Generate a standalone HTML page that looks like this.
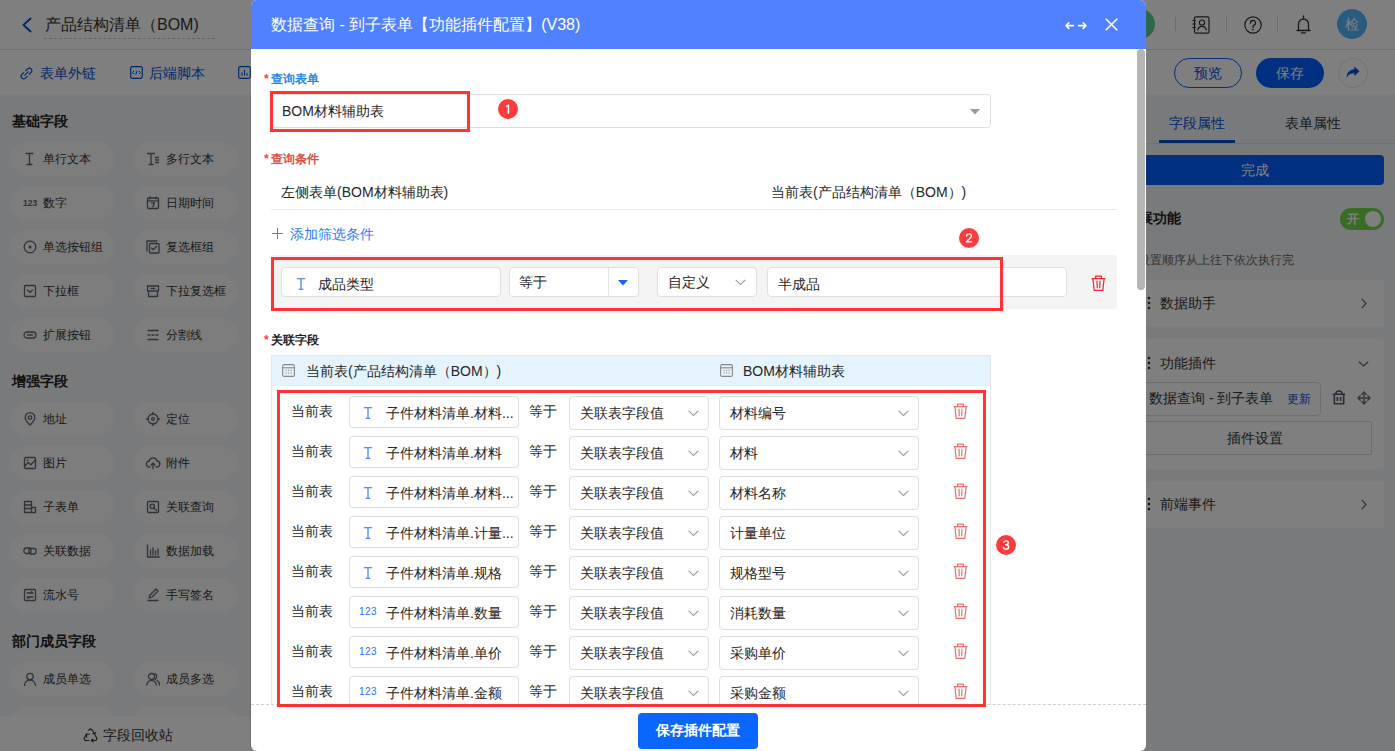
<!DOCTYPE html>
<html><head><meta charset="utf-8">
<style>
*{box-sizing:border-box;margin:0;padding:0}
html,body{width:1395px;height:751px;overflow:hidden;background:#fff}
body{position:relative;font-family:"Liberation Sans",sans-serif;font-size:14px;color:#262626}
.a{position:absolute}
.t{position:absolute;white-space:nowrap;line-height:20px}
svg{position:absolute;overflow:visible}
/* base page */
#hdr{left:0;top:0;width:1395px;height:50px;background:#fff;border-bottom:1px solid #e6e6e6}
#tb{left:0;top:50px;width:1395px;height:45px;background:#fff}
#lp{left:0;top:95px;width:251px;height:656px;background:#f3f4f7;border-right:1px solid #e2e2e2}
#rp{left:1146px;top:95px;width:249px;height:656px;background:#f3f4f7}
.chip{position:absolute;width:105px;height:34px;border-radius:17px;background:#fafafb}
.chip span{position:absolute;left:33px;top:7px;line-height:20px;font-size:12px;color:#333;white-space:nowrap}
.sec{position:absolute;left:12px;font-size:14px;font-weight:bold;color:#222;line-height:20px}
#mask{left:0;top:0;width:1395px;height:751px;background:rgba(0,0,0,.5)}
/* modal */
#modal{left:251px;top:0;width:895px;height:751px;background:#fff;border-radius:6px;overflow:hidden}
#mh{left:0;top:0;width:895px;height:49px;background:#5082ff}
.lbl{position:absolute;font-size:12px;font-weight:bold;line-height:16px;white-space:nowrap}
.lbl i{font-style:normal;color:#f5453d;margin-right:2px}
.box{position:absolute;background:#fff;border:1px solid #dfdfdf;border-radius:4px}
.rbox{position:absolute;border:3px solid #ff3333}
.badge{position:absolute;width:20px;height:20px;border-radius:10px;background:#ff3b3b;color:#fff;font-size:12px;line-height:20px;text-align:center}
</style></head><body>
<!-- ============ BASE PAGE ============ -->
<div id="hdr" class="a"></div>
<div id="tb" class="a"></div>
<div id="lp" class="a"></div>
<div id="rp" class="a"></div>
<!-- header -->
<svg style="left:21px;top:17px" width="11" height="16" viewBox="0 0 11 16"><path d="M9.5 1.5L2.5 8l7 6.5" fill="none" stroke="#0052d9" stroke-width="2" stroke-linecap="round" stroke-linejoin="round"/></svg>
<div class="t" style="left:45px;top:14px;font-size:16px;line-height:22px;color:#333">产品结构清单（BOM)</div>
<div class="a" style="left:44px;top:38px;width:171px;height:0;border-top:1px dashed #c8c8c8"></div>
<div class="a" style="left:1125px;top:9px;width:30px;height:30px;border-radius:15px;background:#5ad38f"></div>
<div class="a" style="left:1175px;top:17px;width:1px;height:14px;background:#d9d9d9"></div>
<div class="a" style="left:1226px;top:17px;width:1px;height:14px;background:#d9d9d9"></div>
<div class="a" style="left:1277px;top:17px;width:1px;height:14px;background:#d9d9d9"></div>
<svg style="left:1192px;top:16px" width="18" height="18" viewBox="0 0 18 18"><rect x="2.5" y="0.8" width="14.5" height="16.4" rx="1.5" fill="none" stroke="#333" stroke-width="1.2"/><circle cx="10" cy="6.6" r="2.6" fill="none" stroke="#333" stroke-width="1.2"/><path d="M5.6 14.3c0.6-2.8 2.3-4 4.4-4s3.8 1.2 4.4 4" fill="none" stroke="#333" stroke-width="1.2"/><path d="M0.3 4.5h3.5M0.3 8h3.5M0.3 11.5h3.5" stroke="#333" stroke-width="1.2"/></svg>
<svg style="left:1244px;top:16px" width="18" height="18" viewBox="0 0 18 18"><circle cx="9" cy="9" r="8.2" fill="none" stroke="#333" stroke-width="1.2"/><path d="M6.5 7a2.5 2.5 0 1 1 3.6 2.2c-.8.4-1.1.9-1.1 1.7v.6" fill="none" stroke="#333" stroke-width="1.3" stroke-linecap="round"/><circle cx="9" cy="13.6" r="0.9" fill="#333"/></svg>
<svg style="left:1296px;top:15px" width="15" height="19" viewBox="0 0 15 19"><path d="M1 15.5h13M2.5 15.5V9a5 5 0 0 1 10 0v6.5" fill="none" stroke="#333" stroke-width="1.3" stroke-linecap="round"/><path d="M7.5 1v2" stroke="#333" stroke-width="1.3" stroke-linecap="round"/><path d="M5.5 17.8h4" stroke="#333" stroke-width="1.3" stroke-linecap="round"/></svg>
<div class="a" style="left:1337px;top:9px;width:30px;height:30px;border-radius:15px;background:#57b4ff;color:#fff;font-size:14px;line-height:30px;text-align:center">检</div>
<!-- toolbar -->
<svg style="left:20px;top:67px" width="13" height="13" viewBox="0.5 0.5 11 11"><path d="M4.6 7.4l2.8-2.8M3.6 5.4L2.1 6.9a2.1 2.1 0 0 0 3 3l1.5-1.5M8.4 6.6l1.5-1.5a2.1 2.1 0 0 0-3-3L5.4 3.6" fill="none" stroke="#0052d9" stroke-width="1" stroke-linecap="round"/></svg>
<div class="t" style="left:40px;top:63px;color:#0052d9">表单外链</div>
<svg style="left:130px;top:66px" width="13" height="13" viewBox="0 0 13 13"><rect x="0.7" y="0.7" width="11.6" height="11.6" rx="1.5" fill="none" stroke="#0052d9" stroke-width="1.2"/><path d="M4 8l-1.5-1.5L4 5M9 5l1.5 1.5L9 8M7.2 4.5L5.8 8.5" fill="none" stroke="#0052d9" stroke-width="1"/></svg>
<div class="t" style="left:149px;top:63px;color:#0052d9">后端脚本</div>
<svg style="left:238px;top:66px" width="13" height="13" viewBox="0 0 13 13"><rect x="0.7" y="0.7" width="11.6" height="11.6" rx="1.5" fill="none" stroke="#0052d9" stroke-width="1.2"/><path d="M4 9.5V6.5M6.5 9.5V4M9 9.5V7" stroke="#0052d9" stroke-width="1.1"/></svg>
<div class="a" style="left:1174px;top:58px;width:68px;height:30px;border-radius:15px;border:1px solid #0061ff;color:#0052d9;font-size:14px;line-height:28px;text-align:center">预览</div>
<div class="a" style="left:1256px;top:58px;width:68px;height:30px;border-radius:15px;background:#0061ff;color:#fff;font-size:14px;line-height:30px;text-align:center">保存</div>
<div class="a" style="left:1338px;top:58px;width:30px;height:30px;border-radius:15px;border:1px solid #dfe6f5;background:#fff"></div>
<svg style="left:1346px;top:66px" width="14" height="13" viewBox="0 0 14 13"><path d="M13.5 5.2L8.3 0.5v2.8C3.5 3.6 1 6.5 0.5 12c1.8-3.4 4.2-4.8 7.8-4.8v2.8z" fill="#0052d9"/></svg>
<!-- left panel -->
<div class="sec" style="top:111px">基础字段</div>
<div class="sec" style="top:371px">增强字段</div>
<div class="sec" style="top:631px">部门成员字段</div>
<div class="chip" style="left:10px;top:142px"><span>单行文本</span></div>
<svg style="left:23px;top:152px" width="14" height="14" viewBox="0 0 14 14"><path d="M3 1.5h7M6.5 1.5v11M4 12.5h5" stroke="#5f6675" stroke-width="1.3" fill="none" stroke-linecap="round" stroke-linejoin="round"/></svg>
<div class="chip" style="left:133px;top:142px"><span>多行文本</span></div>
<svg style="left:146px;top:152px" width="14" height="14" viewBox="0 0 14 14"><path d="M1.5 1.5h7M5 1.5v11M3 12.5h4M9.5 5.5h3M9.5 8h3M9.5 10.5h3" stroke="#5f6675" stroke-width="1.3" fill="none" stroke-linecap="round" stroke-linejoin="round"/></svg>
<div class="chip" style="left:10px;top:186px"><span>数字</span></div>
<svg style="left:23px;top:196px" width="14" height="14" viewBox="0 0 14 14"><text x="0" y="10" font-size="8.5" font-weight="bold" fill="#5f6675" font-family="Liberation Sans">123</text></svg>
<div class="chip" style="left:133px;top:186px"><span>日期时间</span></div>
<svg style="left:146px;top:196px" width="14" height="14" viewBox="0 0 14 14"><rect x="1.5" y="2" width="11" height="10.5" rx="1.2" stroke="#5f6675" stroke-width="1.3" fill="none" stroke-linecap="round" stroke-linejoin="round"/><path d="M1.5 4.8h11M4 0.8v2M10 0.8v2M5.5 6.8h3l-1.8 4" stroke="#5f6675" stroke-width="1.3" fill="none" stroke-linecap="round" stroke-linejoin="round"/></svg>
<div class="chip" style="left:10px;top:230px"><span>单选按钮组</span></div>
<svg style="left:23px;top:240px" width="14" height="14" viewBox="0 0 14 14"><circle cx="7" cy="7" r="5.8" stroke="#5f6675" stroke-width="1.3" fill="none" stroke-linecap="round" stroke-linejoin="round"/><circle cx="7" cy="7" r="1.5" fill="#5f6675"/></svg>
<div class="chip" style="left:133px;top:230px"><span>复选框组</span></div>
<svg style="left:146px;top:240px" width="14" height="14" viewBox="0 0 14 14"><rect x="3.5" y="3.5" width="9.5" height="9.5" rx="1" stroke="#5f6675" stroke-width="1.3" fill="none" stroke-linecap="round" stroke-linejoin="round"/><path d="M1 11V1h10M5.5 8l1.8 1.8 3.4-3.6" stroke="#5f6675" stroke-width="1.3" fill="none" stroke-linecap="round" stroke-linejoin="round"/></svg>
<div class="chip" style="left:10px;top:274px"><span>下拉框</span></div>
<svg style="left:23px;top:284px" width="14" height="14" viewBox="0 0 14 14"><rect x="1.5" y="1.5" width="11" height="11" rx="1" stroke="#5f6675" stroke-width="1.3" fill="none" stroke-linecap="round" stroke-linejoin="round"/><path d="M4.5 6l2.5 2.5L9.5 6" stroke="#5f6675" stroke-width="1.3" fill="none" stroke-linecap="round" stroke-linejoin="round"/></svg>
<div class="chip" style="left:133px;top:274px"><span>下拉复选框</span></div>
<svg style="left:146px;top:284px" width="14" height="14" viewBox="0 0 14 14"><path d="M1.5 2h11v5h-11zM2.5 7v5.5h9V7M5 4.5h4" stroke="#5f6675" stroke-width="1.3" fill="none" stroke-linecap="round" stroke-linejoin="round"/></svg>
<div class="chip" style="left:10px;top:318px"><span>扩展按钮</span></div>
<svg style="left:23px;top:328px" width="14" height="14" viewBox="0 0 14 14"><rect x="1" y="4" width="12" height="6" rx="3" stroke="#5f6675" stroke-width="1.3" fill="none" stroke-linecap="round" stroke-linejoin="round"/><path d="M4.5 7h5" stroke="#5f6675" stroke-width="1.3" fill="none" stroke-linecap="round" stroke-linejoin="round"/></svg>
<div class="chip" style="left:133px;top:318px"><span>分割线</span></div>
<svg style="left:146px;top:328px" width="14" height="14" viewBox="0 0 14 14"><path d="M2 2.5h10M2 11.5h10M2 7h2M6 7h2M10 7h2" stroke="#5f6675" stroke-width="1.3" fill="none" stroke-linecap="round" stroke-linejoin="round"/></svg>
<div class="chip" style="left:10px;top:402px"><span>地址</span></div>
<svg style="left:23px;top:412px" width="14" height="14" viewBox="0 0 14 14"><path d="M7 13s-4.8-4.6-4.8-7.6a4.8 4.8 0 0 1 9.6 0C11.8 8.4 7 13 7 13z" stroke="#5f6675" stroke-width="1.3" fill="none" stroke-linecap="round" stroke-linejoin="round"/><circle cx="7" cy="5.6" r="1.8" stroke="#5f6675" stroke-width="1.3" fill="none" stroke-linecap="round" stroke-linejoin="round"/></svg>
<div class="chip" style="left:133px;top:402px"><span>定位</span></div>
<svg style="left:146px;top:412px" width="14" height="14" viewBox="0 0 14 14"><circle cx="7" cy="7" r="5" stroke="#5f6675" stroke-width="1.3" fill="none" stroke-linecap="round" stroke-linejoin="round"/><circle cx="7" cy="7" r="1.4" stroke="#5f6675" stroke-width="1.3" fill="none" stroke-linecap="round" stroke-linejoin="round"/><path d="M7 0.5v2M7 11.5v2M0.5 7h2M11.5 7h2" stroke="#5f6675" stroke-width="1.3" fill="none" stroke-linecap="round" stroke-linejoin="round"/></svg>
<div class="chip" style="left:10px;top:446px"><span>图片</span></div>
<svg style="left:23px;top:456px" width="14" height="14" viewBox="0 0 14 14"><rect x="1.5" y="1.5" width="11" height="11" rx="1.2" stroke="#5f6675" stroke-width="1.3" fill="none" stroke-linecap="round" stroke-linejoin="round"/><path d="M1.8 10l3.5-3.5 2.5 2.2L12.3 4" stroke="#5f6675" stroke-width="1.3" fill="none" stroke-linecap="round" stroke-linejoin="round"/><circle cx="4.5" cy="4.5" r="0.9" fill="#5f6675"/></svg>
<div class="chip" style="left:133px;top:446px"><span>附件</span></div>
<svg style="left:146px;top:456px" width="14" height="14" viewBox="0 0 14 14"><path d="M4 11H3.5a3 3 0 0 1-.3-6A4 4 0 0 1 11 5a3 3 0 0 1-.5 6H10M7 12.8V7M5 9l2-2 2 2" stroke="#5f6675" stroke-width="1.3" fill="none" stroke-linecap="round" stroke-linejoin="round"/></svg>
<div class="chip" style="left:10px;top:490px"><span>子表单</span></div>
<svg style="left:23px;top:500px" width="14" height="14" viewBox="0 0 14 14"><path d="M1.5 1.5h7v11h-7zM1.5 5h7M8.5 7.5h4v5h-4M1.5 8.5h7" stroke="#5f6675" stroke-width="1.3" fill="none" stroke-linecap="round" stroke-linejoin="round"/></svg>
<div class="chip" style="left:133px;top:490px"><span>关联查询</span></div>
<svg style="left:146px;top:500px" width="14" height="14" viewBox="0 0 14 14"><rect x="1.5" y="1.5" width="11" height="11" rx="1" stroke="#5f6675" stroke-width="1.3" fill="none" stroke-linecap="round" stroke-linejoin="round"/><circle cx="6.3" cy="6.3" r="2.2" stroke="#5f6675" stroke-width="1.3" fill="none" stroke-linecap="round" stroke-linejoin="round"/><path d="M8 8l2.5 2.5" stroke="#5f6675" stroke-width="1.3" fill="none" stroke-linecap="round" stroke-linejoin="round"/></svg>
<div class="chip" style="left:10px;top:534px"><span>关联数据</span></div>
<svg style="left:23px;top:544px" width="14" height="14" viewBox="0 0 14 14"><rect x="1" y="4" width="7" height="5.5" rx="2" stroke="#5f6675" stroke-width="1.3" fill="none" stroke-linecap="round" stroke-linejoin="round"/><rect x="6" y="4.5" width="7" height="5.5" rx="2" stroke="#5f6675" stroke-width="1.3" fill="none" stroke-linecap="round" stroke-linejoin="round"/></svg>
<div class="chip" style="left:133px;top:534px"><span>数据加载</span></div>
<svg style="left:146px;top:544px" width="14" height="14" viewBox="0 0 14 14"><path d="M1.5 1v12h12M4.5 11V6M7 11V4M9.5 11V7M12 11V5" stroke="#5f6675" stroke-width="1.3" fill="none" stroke-linecap="round" stroke-linejoin="round"/></svg>
<div class="chip" style="left:10px;top:578px"><span>流水号</span></div>
<svg style="left:23px;top:588px" width="14" height="14" viewBox="0 0 14 14"><rect x="1.5" y="1.5" width="11" height="11" rx="1" stroke="#5f6675" stroke-width="1.3" fill="none" stroke-linecap="round" stroke-linejoin="round"/><path d="M4 5h6l-1.5-1.3M10 9H4l1.5 1.3" stroke="#5f6675" stroke-width="1.3" fill="none" stroke-linecap="round" stroke-linejoin="round"/></svg>
<div class="chip" style="left:133px;top:578px"><span>手写签名</span></div>
<svg style="left:146px;top:588px" width="14" height="14" viewBox="0 0 14 14"><path d="M2 12.5h10M3 10l1-3 6-6 2 2-6 6z" stroke="#5f6675" stroke-width="1.3" fill="none" stroke-linecap="round" stroke-linejoin="round"/></svg>
<div class="chip" style="left:10px;top:662px"><span>成员单选</span></div>
<svg style="left:23px;top:672px" width="14" height="14" viewBox="0 0 14 14"><circle cx="7" cy="4.5" r="3.2" stroke="#5f6675" stroke-width="1.3" fill="none" stroke-linecap="round" stroke-linejoin="round"/><path d="M1.5 13.5a5.5 5.5 0 0 1 11 0" stroke="#5f6675" stroke-width="1.3" fill="none" stroke-linecap="round" stroke-linejoin="round"/></svg>
<div class="chip" style="left:133px;top:662px"><span>成员多选</span></div>
<svg style="left:146px;top:672px" width="14" height="14" viewBox="0 0 14 14"><circle cx="5.5" cy="4.5" r="3" stroke="#5f6675" stroke-width="1.3" fill="none" stroke-linecap="round" stroke-linejoin="round"/><path d="M0.8 13a4.7 4.7 0 0 1 9.4 0M8.8 1.7a3 3 0 0 1 0 5.6M11 8.5a4.7 4.7 0 0 1 2.4 4.5" stroke="#5f6675" stroke-width="1.3" fill="none" stroke-linecap="round" stroke-linejoin="round"/></svg>
<div class="chip" style="left:10px;top:706px"><span></span></div>
<div class="chip" style="left:133px;top:706px"><span></span></div>
<!-- left bottom bar -->
<div class="a" style="left:0;top:716px;width:250px;height:35px;background:#fff"></div>
<svg style="left:83px;top:728px" width="15" height="14" viewBox="0 0 15 14"><path d="M5.6 2.2L7.5 0.8l1.9 1.4 2.2 3.8M12.6 4.6l-1 1.5-1.6-.6M3.5 6L1 10.5l1 2h4M3.7 9.2l-.3-3.1 2.9.2M8.5 12.5h4.5l1-2L12 7M10.2 14l-1.7-1.5 1.5-1.5" fill="none" stroke="#333" stroke-width="1.1" stroke-linecap="round" stroke-linejoin="round"/></svg>
<div class="t" style="left:103px;top:725px;color:#333">字段回收站</div>
<!-- right panel -->
<div class="a" style="left:1146px;top:143px;width:249px;height:1px;background:#e3e3e3"></div>
<div class="t" style="left:1169px;top:113px;color:#0052d9">字段属性</div>
<div class="t" style="left:1285px;top:113px;color:#333">表单属性</div>
<div class="a" style="left:1159px;top:140px;width:76px;height:3px;background:#0052d9"></div>
<div class="a" style="left:1126px;top:155px;width:258px;height:30px;border-radius:4px;background:#0061ff;color:#fff;font-size:14px;line-height:30px;text-align:center">完成</div>
<div class="t" style="left:1125px;top:208px;font-weight:bold;color:#222">扩展功能</div>
<div class="a" style="left:1340px;top:208px;width:44px;height:22px;border-radius:11px;background:#72d848"></div>
<div class="a" style="left:1365px;top:211px;width:16px;height:16px;border-radius:8px;background:#fff"></div>
<div class="t" style="left:1347px;top:209px;font-size:12px;color:#fff;font-weight:bold">开</div>
<div class="t" style="left:1138px;top:250px;font-size:12px;color:#666">设置顺序从上往下依次执行完</div>
<div class="a" style="left:1126px;top:280px;width:258px;height:47px;border-radius:4px;background:#fff"></div>
<div class="a" style="left:1126px;top:339px;width:258px;height:130px;border-radius:4px;background:#fff"></div>
<div class="a" style="left:1126px;top:481px;width:258px;height:47px;border-radius:4px;background:#fff"></div>
<div class="t" style="left:1160px;top:293px;color:#333">数据助手</div>
<div class="t" style="left:1160px;top:353px;color:#333">功能插件</div>
<div class="t" style="left:1160px;top:494px;color:#333">前端事件</div>
<svg style="left:1147px;top:296px" width="4" height="14" viewBox="0 0 4 14"><circle cx="2" cy="2" r="1.3" fill="#333"/><circle cx="2" cy="7" r="1.3" fill="#333"/><circle cx="2" cy="12" r="1.3" fill="#333"/></svg>
<svg style="left:1147px;top:356px" width="4" height="14" viewBox="0 0 4 14"><circle cx="2" cy="2" r="1.3" fill="#333"/><circle cx="2" cy="7" r="1.3" fill="#333"/><circle cx="2" cy="12" r="1.3" fill="#333"/></svg>
<svg style="left:1147px;top:497px" width="4" height="14" viewBox="0 0 4 14"><circle cx="2" cy="2" r="1.3" fill="#333"/><circle cx="2" cy="7" r="1.3" fill="#333"/><circle cx="2" cy="12" r="1.3" fill="#333"/></svg>
<svg style="left:1361px;top:298px" width="6" height="11" viewBox="0 0 6 11"><path d="M0.8 0.8L5 5.5 0.8 10.2" fill="none" stroke="#666" stroke-width="1.2"/></svg>
<svg style="left:1361px;top:499px" width="6" height="11" viewBox="0 0 6 11"><path d="M0.8 0.8L5 5.5 0.8 10.2" fill="none" stroke="#666" stroke-width="1.2"/></svg>
<svg style="left:1358px;top:361px" width="11" height="6" viewBox="0 0 11 6"><path d="M0.8 0.8L5.5 5 10.2 0.8" fill="none" stroke="#666" stroke-width="1.2"/></svg>
<div class="a" style="left:1126px;top:382px;width:195px;height:34px;border-radius:4px;border:1px solid #dcdcdc;background:#fff"></div>
<div class="t" style="left:1149px;top:388px;color:#333">数据查询 - 到子表单</div>
<div class="t" style="left:1287px;top:389px;font-size:12px;color:#0052d9">更新</div>
<svg style="left:1332px;top:390px" width="14" height="15" viewBox="0 0 14 15"><path d="M0.8 4.2h12.4M3.8 4.2C3.8 2 5.2 1 7 1s3.2 1 3.2 3.2M2.3 4.2v9.6h9.4V4.2M5.4 7v4M8.6 7v4" fill="none" stroke="#505a6e" stroke-width="1.6" stroke-linejoin="round"/></svg>
<svg style="left:1357px;top:391px" width="14" height="14" viewBox="0 0 14 14"><path d="M7 1v12M1 7h12M4.8 3.2L7 1l2.2 2.2M4.8 10.8L7 13l2.2-2.2M3.2 4.8L1 7l2.2 2.2M10.8 4.8L13 7l-2.2 2.2" fill="none" stroke="#6e7480" stroke-width="1.5" stroke-linecap="round" stroke-linejoin="round"/></svg>
<div class="a" style="left:1126px;top:421px;width:246px;height:34px;border-radius:2px;border:1px solid #dcdcdc;background:#fff;color:#333;font-size:14px;line-height:32px;text-align:center;padding-left:12px">插件设置</div>

<div id="mask" class="a"></div>
<div id="modal" class="a">
  <div id="mh" class="a"></div>
  <div class="t" style="left:20px;top:15px;font-size:16px;color:#fff">数据查询 - 到子表单【功能插件配置】(V38)</div>
  <svg style="left:814px;top:21px" width="22" height="9" viewBox="0 0 22 9"><path d="M1 4.6h7.5M1 4.6L3.8 1.8M1 4.6L3.8 7.4M13.5 4.6h7.5M21 4.6L18.2 1.8M21 4.6L18.2 7.4" fill="none" stroke="#fff" stroke-width="1.6" stroke-linecap="round" stroke-linejoin="round"/></svg>
  <svg style="left:854px;top:18px" width="13" height="13" viewBox="0 0 13 13"><path d="M0.7 0.7l11.6 11.6M12.3 0.7L0.7 12.3" stroke="#fff" stroke-width="1.6"/></svg>
  <div class="a" style="left:0;top:704px;width:895px;height:0;border-top:1px dashed #d0d0d0"></div>
  <div class="a" style="left:387px;top:713px;width:120px;height:36px;border-radius:4px;background:#0a66ff;color:#fff;font-size:14px;font-weight:bold;line-height:34px;text-align:center">保存插件配置</div>
  <div class="a" style="left:886px;top:49px;width:9px;height:655px;background:#fff"></div>
  <div class="a" style="left:886px;top:49px;width:8px;height:241px;border-radius:4px;background:#b5b5b5"></div>
</div>
<div class="a" style="left:251px;top:49px;width:886px;height:655px;overflow:hidden">
<div class="a" style="left:-251px;top:-49px;width:1395px;height:751px">
  <div class="lbl" style="left:264px;top:71px;color:#1e8ce6"><i>*</i>查询表单</div>
  <div class="box" style="left:271px;top:94px;width:720px;height:34px"></div>
  <div class="t" style="left:282px;top:101px">BOM材料辅助表</div>
  <svg style="left:970px;top:109px" width="10" height="6" viewBox="0 0 10 6"><path d="M0 0h10L5 5.5z" fill="#999"/></svg>
  <div class="lbl" style="left:264px;top:151px;color:#dc5245"><i>*</i>查询条件</div>
  <div class="t" style="left:281px;top:182px">左侧表单(BOM材料辅助表)</div>
  <div class="t" style="left:771px;top:182px">当前表(产品结构清单（BOM）)</div>
  <div class="a" style="left:271px;top:209px;width:846px;height:1px;background:#e8e8e8"></div>
  <svg style="left:272px;top:228px" width="11" height="11" viewBox="0 0 11 11"><path d="M5.5 0v11M0 5.5h11" stroke="#4a7bff" stroke-width="1"/></svg>
  <div class="t" style="left:290px;top:224px;color:#2a7bff">添加筛选条件</div>
  <div class="a" style="left:271px;top:255px;width:846px;height:54px;border-radius:3px;background:#f4f4f4"></div>
  <div class="box" style="left:281px;top:267px;width:220px;height:30px"></div>
  <svg style="left:296px;top:278px" width="10" height="12" viewBox="0 0 10 12"><path d="M0.8 0.8h8.4M5 0.8v10.4M2.6 11.2h4.8" fill="none" stroke="#2f6bff" stroke-width="1.1"/></svg>
  <div class="t" style="left:318px;top:274px">成品类型</div>
  <div class="box" style="left:509px;top:267px;width:130px;height:30px"></div>
  <div class="a" style="left:608px;top:268px;width:1px;height:28px;background:#e4e4e4"></div>
  <div class="t" style="left:519px;top:272px">等于</div>
  <svg style="left:618px;top:280px" width="10" height="6" viewBox="0 0 10 6"><path d="M0 0h10L5 5.5z" fill="#1f5fff"/></svg>
  <div class="box" style="left:657px;top:267px;width:100px;height:30px"></div>
  <div class="t" style="left:668px;top:272px">自定义</div>
  <svg style="left:735px;top:279px" width="11" height="7" viewBox="0 0 11 7"><path d="M0.7 0.9L5.5 5.6 10.3 0.9" fill="none" stroke="#8c95a3" stroke-width="1.1"/></svg>
  <div class="box" style="left:767px;top:267px;width:300px;height:30px"></div>
  <div class="t" style="left:778px;top:274px">半成品</div>
  <svg style="left:1091px;top:275px" width="15" height="16" viewBox="0 0 15 16"><path d="M0.6 3.6h13.8M4.6 3.6V1.1h5.8v2.5M1.9 3.6l1.3 11.8h8.6l1.3-11.8M6 5.8l.3 7.4M9 5.8l-.3 7.4" fill="none" stroke="#f5222d" stroke-width="1.2" stroke-linejoin="round"/></svg>
  <div class="lbl" style="left:264px;top:332px;color:#222"><i>*</i>关联字段</div>
  <div class="a" style="left:271px;top:355px;width:720px;height:400px;border:1px solid #e4e7f0;border-top:none"></div>
  <div class="a" style="left:271px;top:355px;width:720px;height:31px;background:#e5f3fe;border:1px solid #e3e8ee;border-bottom:none"></div>
  <svg style="left:282px;top:364px" width="13" height="13" viewBox="0 0 13 13"><rect x="0.6" y="0.6" width="11.8" height="11.8" rx="1.5" fill="none" stroke="#888" stroke-width="1.1"/><path d="M0.6 3.8h11.8" stroke="#888" stroke-width="1.1"/><path d="M3.5 6.3h1.2M6 6.3h1.2M8.5 6.3h1.2M3.5 9h1.2M6 9h1.2M8.5 9h1.2" stroke="#888" stroke-width="1.1"/></svg>
  <div class="t" style="left:306px;top:361px">当前表(产品结构清单（BOM）)</div>
  <svg style="left:720px;top:364px" width="13" height="13" viewBox="0 0 13 13"><rect x="0.6" y="0.6" width="11.8" height="11.8" rx="1.5" fill="none" stroke="#888" stroke-width="1.1"/><path d="M0.6 3.8h11.8" stroke="#888" stroke-width="1.1"/><path d="M3.5 6.3h1.2M6 6.3h1.2M8.5 6.3h1.2M3.5 9h1.2M6 9h1.2M8.5 9h1.2" stroke="#888" stroke-width="1.1"/></svg>
  <div class="t" style="left:743px;top:361px">BOM材料辅助表</div>
<div class="t" style="left:291px;top:401px;color:#262626">当前表</div>
<div class="box" style="left:349px;top:396px;width:170px;height:32px"></div>
<svg style="left:363px;top:407px" width="10" height="12" viewBox="0 0 10 12"><path d="M0.8 0.8h8.4M5 0.8v10.4M2.6 11.2h4.8" fill="none" stroke="#2f6bff" stroke-width="1.1"/></svg>
<div class="t" style="left:386px;top:403px">子件材料清单.材料...</div>
<div class="t" style="left:529px;top:401px">等于</div>
<div class="box" style="left:569px;top:396px;width:140px;height:34px"></div>
<div class="t" style="left:580px;top:403px">关联表字段值</div>
<svg style="left:688px;top:410px" width="11" height="7" viewBox="0 0 11 7"><path d="M0.7 0.9L5.5 5.6 10.3 0.9" fill="none" stroke="#8c95a3" stroke-width="1.1"/></svg>
<div class="box" style="left:719px;top:396px;width:200px;height:34px"></div>
<div class="t" style="left:730px;top:403px">材料编号</div>
<svg style="left:898px;top:410px" width="11" height="7" viewBox="0 0 11 7"><path d="M0.7 0.9L5.5 5.6 10.3 0.9" fill="none" stroke="#8c95a3" stroke-width="1.1"/></svg>
<svg style="left:953px;top:403px" width="15" height="16" viewBox="0 0 15 16"><path d="M0.6 3.6h13.8M4.6 3.6V1.1h5.8v2.5M1.9 3.6l1.3 11.8h8.6l1.3-11.8M6 5.8l.3 7.4M9 5.8l-.3 7.4" fill="none" stroke="#f56c6c" stroke-width="1.2" stroke-linejoin="round"/></svg>
<div class="t" style="left:291px;top:441px;color:#262626">当前表</div>
<div class="box" style="left:349px;top:436px;width:170px;height:32px"></div>
<svg style="left:363px;top:447px" width="10" height="12" viewBox="0 0 10 12"><path d="M0.8 0.8h8.4M5 0.8v10.4M2.6 11.2h4.8" fill="none" stroke="#2f6bff" stroke-width="1.1"/></svg>
<div class="t" style="left:386px;top:443px">子件材料清单.材料</div>
<div class="t" style="left:529px;top:441px">等于</div>
<div class="box" style="left:569px;top:436px;width:140px;height:34px"></div>
<div class="t" style="left:580px;top:443px">关联表字段值</div>
<svg style="left:688px;top:450px" width="11" height="7" viewBox="0 0 11 7"><path d="M0.7 0.9L5.5 5.6 10.3 0.9" fill="none" stroke="#8c95a3" stroke-width="1.1"/></svg>
<div class="box" style="left:719px;top:436px;width:200px;height:34px"></div>
<div class="t" style="left:730px;top:443px">材料</div>
<svg style="left:898px;top:450px" width="11" height="7" viewBox="0 0 11 7"><path d="M0.7 0.9L5.5 5.6 10.3 0.9" fill="none" stroke="#8c95a3" stroke-width="1.1"/></svg>
<svg style="left:953px;top:443px" width="15" height="16" viewBox="0 0 15 16"><path d="M0.6 3.6h13.8M4.6 3.6V1.1h5.8v2.5M1.9 3.6l1.3 11.8h8.6l1.3-11.8M6 5.8l.3 7.4M9 5.8l-.3 7.4" fill="none" stroke="#f56c6c" stroke-width="1.2" stroke-linejoin="round"/></svg>
<div class="t" style="left:291px;top:481px;color:#262626">当前表</div>
<div class="box" style="left:349px;top:476px;width:170px;height:32px"></div>
<svg style="left:363px;top:487px" width="10" height="12" viewBox="0 0 10 12"><path d="M0.8 0.8h8.4M5 0.8v10.4M2.6 11.2h4.8" fill="none" stroke="#2f6bff" stroke-width="1.1"/></svg>
<div class="t" style="left:386px;top:483px">子件材料清单.材料...</div>
<div class="t" style="left:529px;top:481px">等于</div>
<div class="box" style="left:569px;top:476px;width:140px;height:34px"></div>
<div class="t" style="left:580px;top:483px">关联表字段值</div>
<svg style="left:688px;top:490px" width="11" height="7" viewBox="0 0 11 7"><path d="M0.7 0.9L5.5 5.6 10.3 0.9" fill="none" stroke="#8c95a3" stroke-width="1.1"/></svg>
<div class="box" style="left:719px;top:476px;width:200px;height:34px"></div>
<div class="t" style="left:730px;top:483px">材料名称</div>
<svg style="left:898px;top:490px" width="11" height="7" viewBox="0 0 11 7"><path d="M0.7 0.9L5.5 5.6 10.3 0.9" fill="none" stroke="#8c95a3" stroke-width="1.1"/></svg>
<svg style="left:953px;top:483px" width="15" height="16" viewBox="0 0 15 16"><path d="M0.6 3.6h13.8M4.6 3.6V1.1h5.8v2.5M1.9 3.6l1.3 11.8h8.6l1.3-11.8M6 5.8l.3 7.4M9 5.8l-.3 7.4" fill="none" stroke="#f56c6c" stroke-width="1.2" stroke-linejoin="round"/></svg>
<div class="t" style="left:291px;top:521px;color:#262626">当前表</div>
<div class="box" style="left:349px;top:516px;width:170px;height:32px"></div>
<svg style="left:363px;top:527px" width="10" height="12" viewBox="0 0 10 12"><path d="M0.8 0.8h8.4M5 0.8v10.4M2.6 11.2h4.8" fill="none" stroke="#2f6bff" stroke-width="1.1"/></svg>
<div class="t" style="left:386px;top:523px">子件材料清单.计量...</div>
<div class="t" style="left:529px;top:521px">等于</div>
<div class="box" style="left:569px;top:516px;width:140px;height:34px"></div>
<div class="t" style="left:580px;top:523px">关联表字段值</div>
<svg style="left:688px;top:530px" width="11" height="7" viewBox="0 0 11 7"><path d="M0.7 0.9L5.5 5.6 10.3 0.9" fill="none" stroke="#8c95a3" stroke-width="1.1"/></svg>
<div class="box" style="left:719px;top:516px;width:200px;height:34px"></div>
<div class="t" style="left:730px;top:523px">计量单位</div>
<svg style="left:898px;top:530px" width="11" height="7" viewBox="0 0 11 7"><path d="M0.7 0.9L5.5 5.6 10.3 0.9" fill="none" stroke="#8c95a3" stroke-width="1.1"/></svg>
<svg style="left:953px;top:523px" width="15" height="16" viewBox="0 0 15 16"><path d="M0.6 3.6h13.8M4.6 3.6V1.1h5.8v2.5M1.9 3.6l1.3 11.8h8.6l1.3-11.8M6 5.8l.3 7.4M9 5.8l-.3 7.4" fill="none" stroke="#f56c6c" stroke-width="1.2" stroke-linejoin="round"/></svg>
<div class="t" style="left:291px;top:561px;color:#262626">当前表</div>
<div class="box" style="left:349px;top:556px;width:170px;height:32px"></div>
<svg style="left:363px;top:567px" width="10" height="12" viewBox="0 0 10 12"><path d="M0.8 0.8h8.4M5 0.8v10.4M2.6 11.2h4.8" fill="none" stroke="#2f6bff" stroke-width="1.1"/></svg>
<div class="t" style="left:386px;top:563px">子件材料清单.规格</div>
<div class="t" style="left:529px;top:561px">等于</div>
<div class="box" style="left:569px;top:556px;width:140px;height:34px"></div>
<div class="t" style="left:580px;top:563px">关联表字段值</div>
<svg style="left:688px;top:570px" width="11" height="7" viewBox="0 0 11 7"><path d="M0.7 0.9L5.5 5.6 10.3 0.9" fill="none" stroke="#8c95a3" stroke-width="1.1"/></svg>
<div class="box" style="left:719px;top:556px;width:200px;height:34px"></div>
<div class="t" style="left:730px;top:563px">规格型号</div>
<svg style="left:898px;top:570px" width="11" height="7" viewBox="0 0 11 7"><path d="M0.7 0.9L5.5 5.6 10.3 0.9" fill="none" stroke="#8c95a3" stroke-width="1.1"/></svg>
<svg style="left:953px;top:563px" width="15" height="16" viewBox="0 0 15 16"><path d="M0.6 3.6h13.8M4.6 3.6V1.1h5.8v2.5M1.9 3.6l1.3 11.8h8.6l1.3-11.8M6 5.8l.3 7.4M9 5.8l-.3 7.4" fill="none" stroke="#f56c6c" stroke-width="1.2" stroke-linejoin="round"/></svg>
<div class="t" style="left:291px;top:601px;color:#262626">当前表</div>
<div class="box" style="left:349px;top:596px;width:170px;height:32px"></div>
<div class="t" style="left:359px;top:602px;font-size:10px;color:#2f6bff;letter-spacing:0.5px">123</div>
<div class="t" style="left:386px;top:603px">子件材料清单.数量</div>
<div class="t" style="left:529px;top:601px">等于</div>
<div class="box" style="left:569px;top:596px;width:140px;height:34px"></div>
<div class="t" style="left:580px;top:603px">关联表字段值</div>
<svg style="left:688px;top:610px" width="11" height="7" viewBox="0 0 11 7"><path d="M0.7 0.9L5.5 5.6 10.3 0.9" fill="none" stroke="#8c95a3" stroke-width="1.1"/></svg>
<div class="box" style="left:719px;top:596px;width:200px;height:34px"></div>
<div class="t" style="left:730px;top:603px">消耗数量</div>
<svg style="left:898px;top:610px" width="11" height="7" viewBox="0 0 11 7"><path d="M0.7 0.9L5.5 5.6 10.3 0.9" fill="none" stroke="#8c95a3" stroke-width="1.1"/></svg>
<svg style="left:953px;top:603px" width="15" height="16" viewBox="0 0 15 16"><path d="M0.6 3.6h13.8M4.6 3.6V1.1h5.8v2.5M1.9 3.6l1.3 11.8h8.6l1.3-11.8M6 5.8l.3 7.4M9 5.8l-.3 7.4" fill="none" stroke="#f56c6c" stroke-width="1.2" stroke-linejoin="round"/></svg>
<div class="t" style="left:291px;top:641px;color:#262626">当前表</div>
<div class="box" style="left:349px;top:636px;width:170px;height:32px"></div>
<div class="t" style="left:359px;top:642px;font-size:10px;color:#2f6bff;letter-spacing:0.5px">123</div>
<div class="t" style="left:386px;top:643px">子件材料清单.单价</div>
<div class="t" style="left:529px;top:641px">等于</div>
<div class="box" style="left:569px;top:636px;width:140px;height:34px"></div>
<div class="t" style="left:580px;top:643px">关联表字段值</div>
<svg style="left:688px;top:650px" width="11" height="7" viewBox="0 0 11 7"><path d="M0.7 0.9L5.5 5.6 10.3 0.9" fill="none" stroke="#8c95a3" stroke-width="1.1"/></svg>
<div class="box" style="left:719px;top:636px;width:200px;height:34px"></div>
<div class="t" style="left:730px;top:643px">采购单价</div>
<svg style="left:898px;top:650px" width="11" height="7" viewBox="0 0 11 7"><path d="M0.7 0.9L5.5 5.6 10.3 0.9" fill="none" stroke="#8c95a3" stroke-width="1.1"/></svg>
<svg style="left:953px;top:643px" width="15" height="16" viewBox="0 0 15 16"><path d="M0.6 3.6h13.8M4.6 3.6V1.1h5.8v2.5M1.9 3.6l1.3 11.8h8.6l1.3-11.8M6 5.8l.3 7.4M9 5.8l-.3 7.4" fill="none" stroke="#f56c6c" stroke-width="1.2" stroke-linejoin="round"/></svg>
<div class="t" style="left:291px;top:681px;color:#262626">当前表</div>
<div class="box" style="left:349px;top:676px;width:170px;height:32px"></div>
<div class="t" style="left:359px;top:682px;font-size:10px;color:#2f6bff;letter-spacing:0.5px">123</div>
<div class="t" style="left:386px;top:683px">子件材料清单.金额</div>
<div class="t" style="left:529px;top:681px">等于</div>
<div class="box" style="left:569px;top:676px;width:140px;height:34px"></div>
<div class="t" style="left:580px;top:683px">关联表字段值</div>
<svg style="left:688px;top:690px" width="11" height="7" viewBox="0 0 11 7"><path d="M0.7 0.9L5.5 5.6 10.3 0.9" fill="none" stroke="#8c95a3" stroke-width="1.1"/></svg>
<div class="box" style="left:719px;top:676px;width:200px;height:34px"></div>
<div class="t" style="left:730px;top:683px">采购金额</div>
<svg style="left:898px;top:690px" width="11" height="7" viewBox="0 0 11 7"><path d="M0.7 0.9L5.5 5.6 10.3 0.9" fill="none" stroke="#8c95a3" stroke-width="1.1"/></svg>
<svg style="left:953px;top:683px" width="15" height="16" viewBox="0 0 15 16"><path d="M0.6 3.6h13.8M4.6 3.6V1.1h5.8v2.5M1.9 3.6l1.3 11.8h8.6l1.3-11.8M6 5.8l.3 7.4M9 5.8l-.3 7.4" fill="none" stroke="#f56c6c" stroke-width="1.2" stroke-linejoin="round"/></svg>

</div>
</div>
<!-- annotations -->
<div class="rbox" style="left:270px;top:91px;width:200px;height:41px"></div>
<svg style="left:498px;top:99px" width="20" height="20" viewBox="-10 -10 20 20"><circle r="10" fill="#ff3b3b"/><path transform="scale(0.9)" d="M-1.6 -2.9L0.5 -4.4V4.5" fill="none" stroke="#fff" stroke-width="1.55" stroke-linecap="round" stroke-linejoin="round"/></svg>
<div class="rbox" style="left:271px;top:257px;width:732px;height:54px"></div>
<svg style="left:959px;top:228px" width="20" height="20" viewBox="-10 -10 20 20"><circle r="10" fill="#ff3b3b"/><path transform="scale(0.9)" d="M-2.7 -2.3C-2.6 -3.8 -1.4 -4.6 0 -4.6C1.6 -4.6 2.7 -3.6 2.7 -2.2C2.7 -0.9 1.8 -0.1 0.6 0.9L-2.9 4.3H3" fill="none" stroke="#fff" stroke-width="1.55" stroke-linecap="round" stroke-linejoin="round"/></svg>
<div class="rbox" style="left:277px;top:390px;width:709px;height:317px"></div>
<svg style="left:996px;top:535px" width="20" height="20" viewBox="-10 -10 20 20"><circle r="10" fill="#ff3b3b"/><path transform="scale(0.9)" d="M-2.6 -3C-2.2 -4.1 -1.1 -4.6 0 -4.6C1.6 -4.6 2.6 -3.7 2.6 -2.4C2.6 -1 1.5 -0.3 -0.4 -0.2C1.8 -0.2 2.9 0.8 2.9 2.2C2.9 3.7 1.7 4.6 0 4.6C-1.3 4.6 -2.5 4 -2.9 2.7" fill="none" stroke="#fff" stroke-width="1.55" stroke-linecap="round" stroke-linejoin="round"/></svg>
</body></html>
